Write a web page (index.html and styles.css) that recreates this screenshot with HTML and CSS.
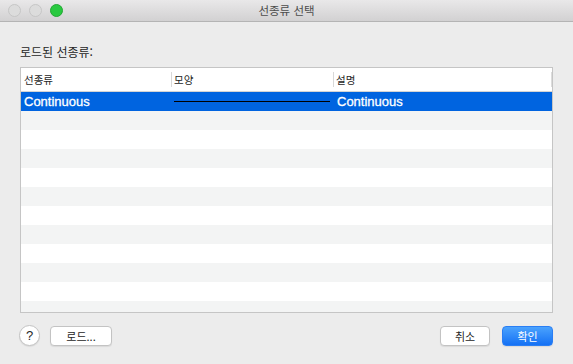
FILE: index.html
```html
<!DOCTYPE html>
<html lang="ko">
<head>
  <meta charset="UTF-8">
  <title>선종류 선택</title>
  <link rel="stylesheet" href="styles.css">
</head>
<body>

  <div class="window">
    <div class="titlebar">
      <div class="lights">
        <span class="light"></span>
        <span class="light"></span>
        <span class="light green"></span>
      </div>
      <div class="title">선종류 선택</div>
    </div>

    <div class="content">
      <p class="label">로드된 선종류:</p>

      <div class="table">
        <div class="thead">
          <div class="th">선종류</div>
          <div class="th sep">모양</div>
          <div class="th sep">설명</div>
          <span class="tail"></span>
        </div>
        <div class="rows">
          <div class="row selected">
            <div class="cell">Continuous</div>
            <div class="cell"><span class="line"></span></div>
            <div class="cell">Continuous</div>
          </div>
          <div class="row"></div>
          <div class="row"></div>
          <div class="row"></div>
          <div class="row"></div>
          <div class="row"></div>
          <div class="row"></div>
          <div class="row"></div>
          <div class="row"></div>
          <div class="row"></div>
          <div class="row"></div>
          <div class="row"></div>
        </div>
      </div>

      <div class="footer">
        <button class="help">?</button>
        <button class="btn load">로드...</button>
        <span class="spacer"></span>
        <button class="btn cancel">취소</button>
        <button class="btn primary">확인</button>
      </div>
    </div>
  </div>

</body>
</html>
```

FILE: styles.css
```css
body {
  margin: 0;
  font-family: "Noto Sans CJK KR", "Liberation Sans", sans-serif;
  background: #ececec;
}
.window {
  width: 573px;
  height: 364px;
  background: #ececec;
  display: flex;
  flex-direction: column;
  overflow: hidden;
}
.titlebar {
  height: 21px;
  border-bottom: 1px solid #b4b4b4;
  background: linear-gradient(to bottom, #e9e8e9, #d2d1d2);
  display: flex;
  align-items: center;
  position: relative;
}
.lights {
  display: flex;
  gap: 8px;
  padding-left: 8px;
}
.light {
  width: 11px;
  height: 11px;
  border-radius: 50%;
  background: #dcdcdc;
  border: 1px solid #c6c6c6;
}
.light.green {
  background: #29c940;
  border-color: #22a833;
}
.title {
  position: absolute;
  left: 0;
  right: 0;
  text-align: center;
  font-size: 11.5px;
  color: #4c4c4c;
  line-height: 21px;
}
.content {
  padding: 0 20px;
}
.label {
  margin: 22px 0 7px;
  font-size: 12px;
  line-height: 16px;
  color: #262626;
}
.table {
  height: 244px;
  border: 1px solid #c5c5c5;
  background: #fff;
  overflow: hidden;
}
.thead {
  display: grid;
  grid-template-columns: 150px 162px 1fr;
  height: 23px;
  border-bottom: 1px solid #d4d4d4;
  position: relative;
}
.th {
  font-size: 10.5px;
  color: #262626;
  padding-left: 3px;
  line-height: 23px;
  position: relative;
}
.th.sep::before {
  content: "";
  position: absolute;
  left: 0;
  top: 4px;
  height: 15px;
  border-left: 1px solid #d8d8d8;
}
.tail {
  position: absolute;
  right: 0;
  top: 4px;
  width: 1px;
  height: 15px;
  background: #dcdcdc;
}
.row {
  height: 19px;
  display: grid;
  grid-template-columns: 150px 162px 1fr;
  align-items: center;
}
.row:nth-child(even) {
  background: #f3f4f4;
}
.row.selected {
  background: #0064e0;
  color: #fff;
}
.row.selected .cell {
  -webkit-text-stroke: 0.3px #fff;
}
.cell {
  font-family: "Liberation Sans", sans-serif;
  font-size: 13px;
  padding-left: 3px;
}
.cell:last-child {
  padding-left: 4px;
}
.line {
  display: block;
  height: 1px;
  background: #000;
  margin-right: 3px;
}
.footer {
  display: flex;
  align-items: center;
  margin-top: 12px;
  gap: 12px;
}
.spacer {
  flex: 1;
}
button {
  font-family: "Noto Sans CJK KR", "Liberation Sans", sans-serif;
  font-size: 11px;
  color: #262626;
  background: #fff;
  border: 1px solid #c3c3c3;
  box-shadow: 0 1px 1px rgba(0, 0, 0, 0.08);
  padding: 0;
}
.help {
  width: 21px;
  height: 21px;
  border-radius: 50%;
  font-family: "Liberation Sans", sans-serif;
  font-size: 13px;
  margin-left: -1px;
  margin-right: -2px;
}
.btn {
  height: 20px;
  border-radius: 4px;
  line-height: 18px;
}
.load {
  width: 62px;
}
.cancel {
  width: 50px;
}
.primary {
  width: 51px;
  color: #fff;
  border-color: #2a7ef4;
  background: linear-gradient(to bottom, #4aa2fd, #1571f4);
}
```
